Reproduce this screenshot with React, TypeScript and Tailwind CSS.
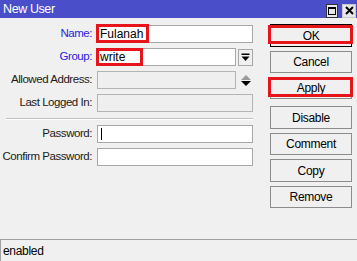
import React from "react";

const font = { fontFamily: '"Liberation Sans", Arial, sans-serif' };

function Field({
  label,
  blue,
  value,
  disabled,
  cursor,
  extra,
}: {
  label: string;
  blue?: boolean;
  value?: string;
  disabled?: boolean;
  cursor?: boolean;
  extra?: React.ReactNode;
}) {
  return (
    <div className="flex h-[18px] items-center">
      <div
        className={`w-[93px] shrink-0 pr-[1px] text-right text-[11.5px] tracking-[-0.45px] ${
          blue ? "text-[#1f1fe0]" : "text-[#1a1a1a]"
        }`}
      >
        {label}
      </div>
      <div className="ml-[4px] flex h-full flex-1 items-center">
        <div
          className={`flex h-full flex-1 items-center border px-[2px] text-[12px] text-black ${
            disabled ? "border-[#b4b4b4] bg-[#efefef]" : "border-[#a8a8a8] bg-white"
          }`}
        >
          {value}
          {cursor && <span className="ml-[1px] h-[12px] w-[1px] bg-black" />}
        </div>
        {extra}
      </div>
    </div>
  );
}

function Btn({ label, isDefault, className = "" }: { label: string; isDefault?: boolean; className?: string }) {
  return (
    <div
      className={`flex w-[82px] items-center justify-center border bg-[#f0f0f0] text-[12px] tracking-[-0.3px] text-black ${
        isDefault ? "border-black" : "border-[#8c8c8c]"
      } ${className}`}
    >
      {label}
    </div>
  );
}

export default function App() {
  return (
    <div className="relative flex h-[261px] w-[357px] flex-col overflow-hidden bg-[#f0f0f0]" style={font}>
      {/* title bar */}
      <div className="flex h-[18px] shrink-0 items-center justify-between bg-[#4a4ec8] pl-[3px] pr-[1px]">
        <span className="text-[12.5px] tracking-[-0.4px] text-white">New User</span>
        <div className="flex items-center gap-[4px] pt-[3px]">
          <div className="flex h-[14px] w-[12px] items-center justify-center border border-[#333] bg-[#e8e8e8]">
            <div className="h-[8px] w-[8px] border border-t-2 border-black" />
          </div>
          <div className="flex h-[14px] w-[14px] items-center justify-center border border-[#c8c8c8] bg-[#e8e8e8]">
            <svg width="9" height="9" viewBox="0 0 9 9">
              <path d="M1 1 L8 8 M8 1 L1 8" stroke="#000" strokeWidth="2" />
            </svg>
          </div>
        </div>
      </div>

      {/* body */}
      <div className="flex flex-1">
        <div className="w-[253px] pt-[7px]">
          <div className="flex flex-col gap-[5px]">
            <Field label="Name:" blue value="Fulanah" />
            <Field
              label="Group:"
              blue
              value="write"
              extra={
                <div className="ml-[2px] flex h-[17px] w-[15px] items-center justify-center border border-[#a8a8a8] bg-[#f0f0f0]">
                  <svg width="9" height="9" viewBox="0 0 9 9">
                    <rect x="0.5" y="0.5" width="8" height="1.5" fill="#000" />
                    <path d="M0.5 3.5 L8.5 3.5 L4.5 8 Z" fill="#000" />
                  </svg>
                </div>
              }
            />
            <Field
              label="Allowed Address:"
              disabled
              extra={
                <div className="ml-[2px] flex h-[17px] w-[15px] flex-col items-center justify-center gap-[1px]">
                  <svg width="10" height="5" viewBox="0 0 10 5">
                    <path d="M0 5 L5 0 L10 5 Z" fill="#9a9a9a" />
                  </svg>
                  <svg width="10" height="5" viewBox="0 0 10 5">
                    <path d="M0 0 L10 0 L5 5 Z" fill="#000" />
                  </svg>
                </div>
              }
            />
            <Field label="Last Logged In:" disabled />
          </div>
          <div className="ml-[6px] mt-[6px] h-[2px] border-t border-b border-t-[#c0c0c0] border-b-white" />
          <div className="mt-[5px] flex flex-col gap-[5px]">
            <Field label="Password:" cursor />
            <Field label="Confirm Password:" />
          </div>
        </div>

        <div className="ml-[17px] flex flex-col pt-[6px]">
          <Btn label="OK" isDefault className="h-[23px]" />
          <Btn label="Cancel" className="mt-[4px] h-[22px]" />
          <Btn label="Apply" className="mt-[4px] h-[22px]" />
          <Btn label="Disable" className="mt-[7px] h-[23px]" />
          <Btn label="Comment" className="mt-[4px] h-[22px]" />
          <Btn label="Copy" className="mt-[4px] h-[23px]" />
          <Btn label="Remove" className="mt-[4px] h-[22px]" />
        </div>
      </div>

      {/* status bar */}
      <div className="flex h-[22px] shrink-0 items-center border-l border-t border-[#a0a0a0] pl-[2px] text-[12px] tracking-[-0.3px] text-black">
        enabled
      </div>

      {/* red annotation boxes */}
      <div className="pointer-events-none absolute left-[96px] top-[24px] h-[19px] w-[53px] border-[3px] border-[#e8141c]" />
      <div className="pointer-events-none absolute left-[96px] top-[48px] h-[18px] w-[47px] border-[3px] border-[#e8141c]" />
      <div className="pointer-events-none absolute left-[268px] top-[25px] h-[19px] w-[85px] border-[3px] border-[#e8141c]" />
      <div className="pointer-events-none absolute left-[268px] top-[77px] h-[20px] w-[85px] border-[3px] border-[#e8141c]" />
    </div>
  );
}
